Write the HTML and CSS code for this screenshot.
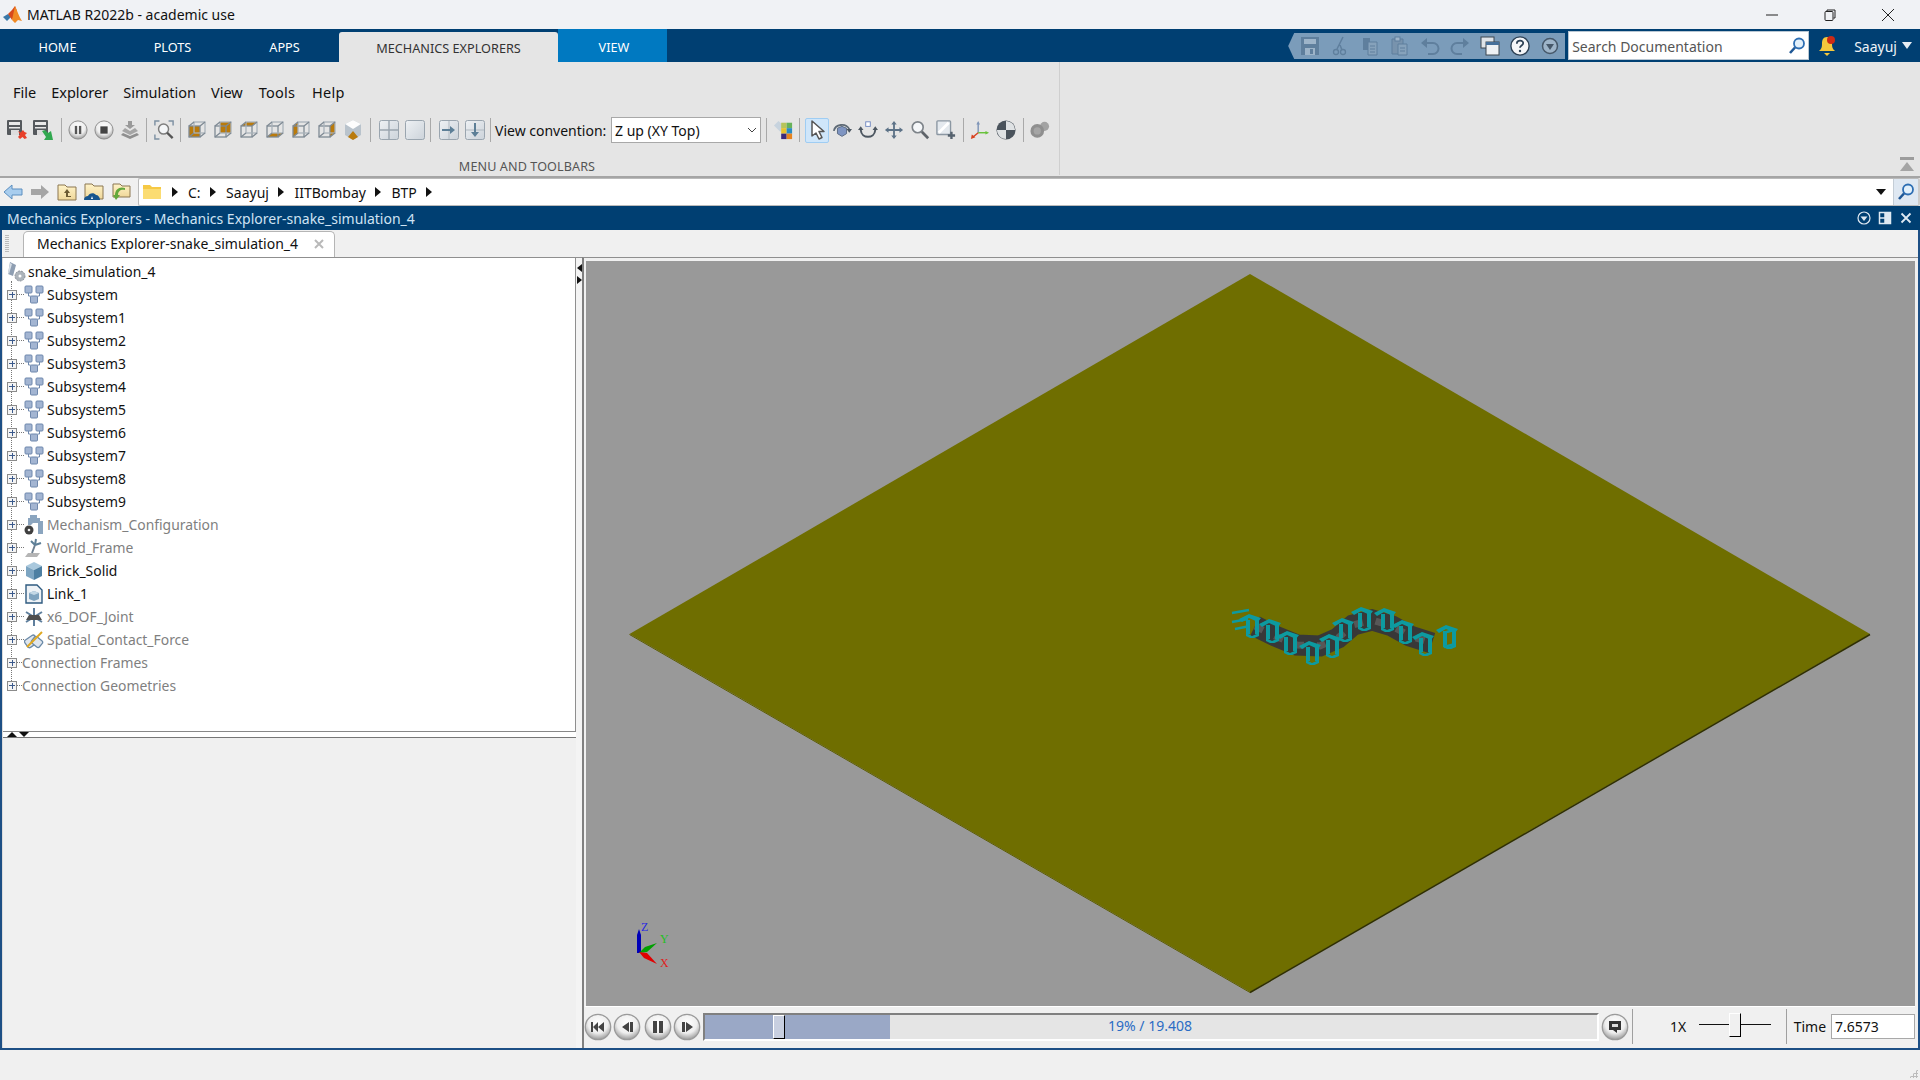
FILE: index.html
```html
<!DOCTYPE html>
<html lang="en">
<head>
<meta charset="utf-8">
<title>MATLAB R2022b - academic use</title>
<link rel="stylesheet" href="styles.css">
</head>
<body>
<svg class="defs" aria-hidden="true">
  <defs>
    <radialGradient id="btn" cx="50%" cy="35%" r="65%"><stop offset="0" stop-color="#fff"/><stop offset=".6" stop-color="#eee"/><stop offset="1" stop-color="#9a9a9a"/></radialGradient>
    <linearGradient id="tile" x1="0" y1="0" x2="1" y2="1"><stop offset="0" stop-color="#eef1f4"/><stop offset="1" stop-color="#ccd3da"/></linearGradient>
    <linearGradient id="fold" x1="0" y1="0" x2="0" y2="1"><stop offset="0" stop-color="#fff3c8"/><stop offset="1" stop-color="#efd79a"/></linearGradient>
    <symbol id="saver" viewBox="0 0 20 20"><rect x="0" y="0" width="15" height="15" rx="1" fill="#55595d"/><rect x="2" y="2" width="11" height="3" fill="#e8e8e8"/><rect x="2" y="7" width="11" height="1.500" fill="#e8e8e8"/><rect x="4" y="10" width="8" height="5" fill="#ddd"/><path d="M11 11l2.500 1.500L16 10l1.500 2 2.500 1-2 2 2 3-2.500 1-2-2-2.500 2-2-2 2-2.500z" fill="#e8402a"/></symbol>
    <symbol id="saveg" viewBox="0 0 20 20"><rect x="0" y="0" width="15" height="15" rx="1" fill="#55595d"/><rect x="2" y="2" width="11" height="3" fill="#e8e8e8"/><rect x="2" y="7" width="11" height="1.500" fill="#e8e8e8"/><rect x="4" y="10" width="8" height="5" fill="#ddd"/><path d="M9 11l3-1 3 3 3-2 2 9h-9l2-3z" fill="#31a84f"/></symbol>
    <symbol id="pause" viewBox="0 0 22 22"><circle cx="11" cy="11" r="10" fill="url(#btn)" stroke="#888"/><rect x="7.500" y="6.500" width="2.600" height="9" fill="#555"/><rect x="12" y="6.500" width="2.600" height="9" fill="#555"/></symbol>
    <symbol id="stop" viewBox="0 0 22 22"><circle cx="11" cy="11" r="10" fill="url(#btn)" stroke="#888"/><rect x="7" y="7" width="8" height="8" fill="#444"/></symbol>
    <symbol id="stack" viewBox="0 0 20 20"><path d="M8 1h4v4h3l-5 4-5-4h3z" fill="#9a9a9a"/><path d="M5 8l5 3 5-3 3 3-8 4-8-4z" fill="#a5a5a5"/><path d="M3 13l7 3 7-3 2 2-9 4-9-4z" fill="#8f8f8f"/></symbol>
    <symbol id="fit" viewBox="0 0 22 22"><path d="M1 6V1h5M16 1h5v5M1 16v5h5" fill="none" stroke="#7e91a3" stroke-width="1.600"/><circle cx="10.500" cy="10" r="5.500" fill="#f4f6f8" stroke="#7d7d7d" stroke-width="1.600"/><path d="M14.500 14l6 6" stroke="#555" stroke-width="2.600"/></symbol>
    <symbol id="cube" viewBox="0 0 20 20"><g fill="none" stroke="#7f8a94" stroke-width="1.300"><rect x="2" y="6" width="11" height="11"/><rect x="7" y="2" width="11" height="11" stroke="#a9b2ba"/><path d="M2 6l5-4M13 6l5-4M13 17l5-4M2 17l5-4"/></g></symbol>
    <symbol id="cf" viewBox="0 0 20 20"><rect x="2" y="6" width="11" height="11" fill="#b97a0c"/><use href="#cube"/></symbol>
    <symbol id="cb" viewBox="0 0 20 20"><rect x="7" y="2" width="11" height="11" fill="#b97a0c"/><use href="#cube"/></symbol>
    <symbol id="ct" viewBox="0 0 20 20"><path d="M2 6l5-4h11l-5 4z" fill="#b97a0c"/><use href="#cube"/></symbol>
    <symbol id="cd" viewBox="0 0 20 20"><path d="M2 17l5-4h11l-5 4z" fill="#b97a0c"/><use href="#cube"/></symbol>
    <symbol id="cl" viewBox="0 0 20 20"><path d="M2 6l5-4v11l-5 4z" fill="#b97a0c"/><use href="#cube"/></symbol>
    <symbol id="cr" viewBox="0 0 20 20"><path d="M13 6l5-4v11l-5 4z" fill="#b97a0c"/><use href="#cube"/></symbol>
    <symbol id="ciso" viewBox="0 0 20 20"><path d="M10 0l8 4v11l-8 5-8-5V4z" fill="#b9c3cc"/><path d="M10 0l8 4-8 5-8-5z" fill="#fdfdfd"/><path d="M10 11l5 6-5 3-5-3z" fill="#b97a0c"/></symbol>
    <symbol id="grid4" viewBox="0 0 20 20"><rect x=".5" y=".5" width="19" height="19" rx="2" fill="url(#tile)" stroke="#9aa5af"/><path d="M10 1v18M1 10h18" stroke="#9aa5af" stroke-width="1.400"/></symbol>
    <symbol id="grid1" viewBox="0 0 20 20"><rect x=".5" y=".5" width="19" height="19" rx="2" fill="url(#tile)" stroke="#9aa5af"/></symbol>
    <symbol id="aright" viewBox="0 0 20 20"><rect x=".5" y=".5" width="19" height="19" rx="2" fill="url(#tile)" stroke="#9aa5af"/><path d="M10 1v18" stroke="#b0b9c1"/><path d="M3 9h8V6l5 4-5 4v-3H3z" fill="#5d7f97"/></symbol>
    <symbol id="adown" viewBox="0 0 20 20"><rect x=".5" y=".5" width="19" height="19" rx="2" fill="url(#tile)" stroke="#9aa5af"/><path d="M1 10h18" stroke="#b0b9c1"/><path d="M9 3h2v9h3l-4 5-4-5h3z" fill="#5d7f97"/></symbol>
    <symbol id="palette" viewBox="0 0 22 22"><path d="M1 6l5-5 8 7-6 5z" fill="#c7d3de"/><rect x="9" y="3" width="6" height="6" fill="#b7c45a"/><rect x="15" y="3" width="6" height="6" fill="#68b25a"/><rect x="9" y="9" width="6" height="6" fill="#e8c22d"/><rect x="15" y="9" width="6" height="6" fill="#2a8cc4"/><rect x="9" y="15" width="6" height="6" fill="#3c2a7d"/><rect x="15" y="15" width="6" height="6" fill="#e8841f"/></symbol>
    <symbol id="cursor" viewBox="0 0 20 20"><path d="M5 1v15l4-3 3 6 3-1.500-3-6h5z" fill="#fff" stroke="#555" stroke-width="1.500" stroke-linejoin="round"/></symbol>
    <symbol id="orbit" viewBox="0 0 22 22"><path d="M2 12a9 8 0 0 1 17-2" fill="none" stroke="#5e6a75" stroke-width="2"/><path d="M16 10h6l-3 4z" fill="#4a5560"/><path d="M11 7l5 2v6l-5 3-5-3V9z" fill="#7f95c2" stroke="#56677f"/></symbol>
    <symbol id="roll" viewBox="0 0 22 22"><path d="M3 11c1 10 15 10 16 0" fill="none" stroke="#4c5660" stroke-width="2.200"/><path d="M0 11h6l-3-4zM16 11h6l-3-4z" fill="#4c5660"/><rect x="8.500" y="2" width="5" height="5" fill="#fff" stroke="#6d86c0"/></symbol>
    <symbol id="pan" viewBox="0 0 22 22"><path d="M11 1l3 4h-2v5h5V8l4 3-4 3v-2h-5v5h2l-3 4-3-4h2v-5H5v2l-4-3 4-3v2h5V5H8z" fill="#5c7287"/></symbol>
    <symbol id="mag" viewBox="0 0 22 22"><circle cx="8.500" cy="8" r="6" fill="#f5f7f9" stroke="#7d8389" stroke-width="1.800"/><path d="M13 13l7 7" stroke="#5e6369" stroke-width="3"/></symbol>
    <symbol id="zbox" viewBox="0 0 22 22"><rect x="1" y="1" width="15" height="15" rx="1" fill="#e4e9ee" stroke="#8b97a2" stroke-width="1.500"/><path d="M3 14L14 3" stroke="#fff" stroke-width="3"/><path d="M13 17h8M17 13v8" stroke="#55626e" stroke-width="2.600"/></symbol>
    <symbol id="axes" viewBox="0 0 22 22"><path d="M9 14V3" stroke="#7f95b8" stroke-width="1.600"/><path d="M9 1l2 4H7z" fill="#7f95b8"/><path d="M9 14h10" stroke="#69c23c" stroke-width="1.600"/><path d="M21 14l-4-2v4z" fill="#69c23c"/><path d="M9 14l-6 5" stroke="#d9421f" stroke-width="1.600"/><path d="M1 21l1-5 4 3z" fill="#d9421f"/></symbol>
    <symbol id="shade" viewBox="0 0 22 22"><circle cx="11" cy="11" r="10.500" fill="#4a535c"/><path d="M11 1a10 10 0 0 1 10 10H11zM11 11v10A10 10 0 0 1 1 11z" fill="#dfe2e4"/></symbol>
    <symbol id="blob" viewBox="0 0 22 22"><circle cx="16" cy="7" r="5" fill="#a3a3a3"/><circle cx="8" cy="12" r="7.500" fill="#8f8f8f"/><circle cx="8" cy="12" r="4" fill="#a5a5a5"/></symbol>
    <symbol id="back" viewBox="0 0 20 16"><path d="M9 1L1 8l8 7v-4h10V5H9z" fill="#a8cdee" stroke="#5c8fc0"/></symbol>
    <symbol id="fwd" viewBox="0 0 20 16"><path d="M11 1l8 7-8 7v-4H1V5h10z" fill="#a6a6a6"/></symbol>
    <symbol id="fup" viewBox="0 0 20 18"><path d="M1 2h7l2 2h9v13H1z" fill="url(#fold)" stroke="#8b7650"/><path d="M10 6l3 4h-2v3h3v1H9v-4H7z" fill="#6b5a32"/></symbol>
    <symbol id="fcloud" viewBox="0 0 20 18"><path d="M1 1h7l2 2h9v13H1z" fill="url(#fold)" stroke="#8b7650"/><path d="M0 17c0-3 2-4 4-4 1-3 6-4 8-1 2 0 4 2 4 5z" fill="#17558d"/><path d="M7 16l1-3 1 3z" fill="#fff"/></symbol>
    <symbol id="fgreen" viewBox="0 0 20 18"><path d="M2 1h7l2 2h8v11H2z" fill="url(#fold)" stroke="#8b7650"/><path d="M14 7c-4-1-7 1-7 5h2l-4 5-3-5h2c0-6 5-9 10-7z" fill="#62a83c"/></symbol>
    <symbol id="pfolder" viewBox="0 0 20 16"><path d="M1 1h7l2 2h9v12H1z" fill="#f6c945"/><path d="M1 5h18v10H1z" fill="#fbdc72"/></symbol>
    <symbol id="qsave" viewBox="0 0 20 20"><path d="M1 1h18v18H1z" fill="#5f7f9d"/><rect x="4" y="3" width="12" height="5" fill="#9db4c9"/><rect x="5" y="12" width="10" height="7" fill="#9db4c9"/><rect x="10" y="13" width="3" height="5" fill="#5f7f9d"/></symbol>
    <symbol id="qcut" viewBox="0 0 20 20"><path d="M13 1L7 13M10 9l2 5" stroke="#5f7f9d" stroke-width="1.500" fill="none"/><circle cx="6" cy="16" r="2.500" fill="none" stroke="#5f7f9d" stroke-width="1.300"/><circle cx="13" cy="16" r="2.500" fill="none" stroke="#5f7f9d" stroke-width="1.300"/></symbol>
    <symbol id="qcopy" viewBox="0 0 20 20"><path d="M3 2h7v12H3z" fill="#5f7f9d"/><path d="M8 6h9v13H8z" fill="#86a2bb" stroke="#5f7f9d"/><path d="M10 10h5M10 13h5M10 16h5" stroke="#5f7f9d"/></symbol>
    <symbol id="qpaste" viewBox="0 0 20 20"><path d="M2 3h11v15H2z" fill="#7893ad" stroke="#5f7f9d"/><rect x="5" y="1" width="5" height="4" fill="#9db4c9" stroke="#5f7f9d"/><path d="M8 8h9v11H8z" fill="#86a2bb" stroke="#5f7f9d"/><path d="M10 12h5M10 15h5" stroke="#5f7f9d"/></symbol>
    <symbol id="qundo" viewBox="0 0 20 20"><path d="M5 7h8a5 5 0 0 1 0 11H8" fill="none" stroke="#5f7f9d" stroke-width="2"/><path d="M1 7l6-5v10z" fill="#5f7f9d"/></symbol>
    <symbol id="qredo" viewBox="0 0 20 20"><path d="M15 7H7a5 5 0 0 0 0 11h5" fill="none" stroke="#5f7f9d" stroke-width="2"/><path d="M19 7l-6-5v10z" fill="#5f7f9d"/></symbol>
    <symbol id="qwin" viewBox="0 0 20 20"><rect x="1" y="1" width="13" height="11" fill="#dfe4e8" stroke="#3c4650"/><rect x="6" y="6" width="13" height="13" fill="#eef1f4" stroke="#3c4650"/><rect x="6" y="6" width="13" height="3" fill="#46709a"/></symbol>
    <symbol id="qhelp" viewBox="0 0 22 22"><circle cx="11" cy="11" r="10" fill="#f5f6f8" stroke="#2e4256" stroke-width="1.500"/><path d="M7.500 8.500c0-5 7.500-4 7-.5 0 2.500-3.500 2.500-3.500 5" fill="none" stroke="#2e4256" stroke-width="2"/><circle cx="11" cy="16.500" r="1.300" fill="#2e4256"/></symbol>
    <symbol id="qdown" viewBox="0 0 20 20"><circle cx="10" cy="10" r="7.500" fill="#9db4c9" stroke="#46586a" stroke-width="1.500"/><path d="M6 8h8l-4 6z" fill="#46586a"/></symbol>
    <symbol id="search" viewBox="0 0 18 18"><circle cx="11" cy="6.500" r="5" fill="#e2f0fb" stroke="#2d6eb3" stroke-width="1.800"/><path d="M7 10.500L2 16" stroke="#1e5796" stroke-width="2.600"/></symbol>
    <symbol id="bell" viewBox="0 0 20 24"><path d="M10 3c4 0 5 3 5 7 0 4 1 5 3 7H2c2-2 3-3 3-7 0-4 1-7 5-7z" fill="#f4c83c"/><path d="M7 19h6l-3 3z" fill="#f4c83c"/><circle cx="14" cy="6" r="4" fill="#cc2a16"/></symbol>
    <symbol id="sub" viewBox="0 0 20 20"><rect x="1" y="1" width="7" height="7" rx="1" fill="#a3b5d2" stroke="#6f88ad"/><rect x="12" y="1" width="7" height="7" rx="1" fill="#a3b5d2" stroke="#6f88ad"/><rect x="6.500" y="11" width="7" height="7" rx="1" fill="#a3b5d2" stroke="#6f88ad"/><path d="M4.500 8v3h2M15.500 8v3h-2" fill="none" stroke="#6f88ad"/></symbol>
    <symbol id="rootm" viewBox="0 0 20 20"><path d="M4 0l6 3-3 11-5-2z" fill="#8e9eb2"/><path d="M4 1l2 1-3 10-1-1z" fill="#d7dee6"/><circle cx="14" cy="14" r="5" fill="#adb4bb" stroke="#8a9099" stroke-dasharray="2 1"/><circle cx="14" cy="14" r="1.500" fill="#fff"/></symbol>
    <symbol id="mech" viewBox="0 0 20 20"><path d="M4 3h12v3h3v13h-5V8H9l-2 2H4z" fill="#8ba5bf"/><path d="M6 0h7v5H6z" fill="#8ba5bf"/><circle cx="5" cy="15" r="4.500" fill="#3f3f3f"/><circle cx="5" cy="15" r="1.300" fill="#eee"/></symbol>
    <symbol id="world" viewBox="0 0 20 20"><path d="M1 19l3-4h12l-3 4z" fill="#b5b5b5"/><path d="M8 15l3-8" stroke="#6d7f90" stroke-width="2"/><path d="M11 7L7 3M11 7l6-2M12 1l-1 6" stroke="#5d7f97" stroke-width="2" fill="none"/></symbol>
    <symbol id="brick" viewBox="0 0 20 20"><path d="M10 1l8 4-8 4-8-4z" fill="#a9c8dd"/><path d="M2 5l8 4v10l-8-4z" fill="#7da5c2"/><path d="M18 5l-8 4v10l8-4z" fill="#4d7fa2"/></symbol>
    <symbol id="file3d" viewBox="0 0 20 20"><path d="M2 1h11l5 5v13H2z" fill="#eef2f6" stroke="#2f5b80" stroke-width="1.400"/><path d="M10 7l5 2v6l-5 2-5-2V9z" fill="#7fa3bf"/><path d="M10 7l5 2-5 2-5-2z" fill="#c4d8e6"/></symbol>
    <symbol id="joint" viewBox="0 0 20 20"><path d="M10 1v18M2 5l16 10M18 5L2 15" stroke="#5f7f9d" stroke-width="2"/><path d="M5 8h10l3 5H2z" fill="#4f4f4f"/></symbol>
    <symbol id="contact" viewBox="0 0 20 20"><rect x="1" y="7" width="12" height="9" rx="2" fill="#dfe6ee" stroke="#6b8aa8" stroke-width="1.300" transform="rotate(-35 7 11)"/><rect x="8" y="8" width="10" height="8" rx="2" fill="#dfe6ee" stroke="#6b8aa8" stroke-width="1.300" transform="rotate(40 13 12)"/><path d="M3 17L18 2" stroke="#dfa820" stroke-width="2"/></symbol>
    <symbol id="rbtn" viewBox="0 0 28 28"><circle cx="14" cy="14" r="12.700" fill="url(#btn)" stroke="#9b9b9b" stroke-width="1.300"/></symbol>
    <symbol id="br" viewBox="-12 -14 24 28"><path fill="#0d9aa0" d="M-11-5L-1-10 11-6 8-2-1-6-8-2zM-4-4H0V10h-4zM-4 9l6 3 7-3v3l-7 3-6-3zM5-5h4V10H5z"/></symbol>
  </defs>
</svg>

<div class="app">
  <header class="titlebar">
    <svg class="logo" viewBox="0 0 20 20"><path d="M0 12l5-3 3 3-4 4z" fill="#3b79a8"/><path d="M5 9l4-4 3-4 2 5-5 9z" fill="#d84a1c"/><path d="M12 1c2 4 4 11 7 15l-4-1-3 3-3-3z" fill="#f08a24"/></svg>
    <span class="apptitle">MATLAB R2022b - academic use</span>
    <div class="winctl">
      <svg class="wc" viewBox="0 0 12 12"><path d="M0 6h12" stroke="#222" stroke-width="1"/></svg>
      <svg class="wc" viewBox="0 0 12 12"><path d="M3 2.500V1h8v8H9.500" fill="none" stroke="#222"/><rect x="1" y="2.500" width="8" height="9" fill="none" stroke="#222" rx="1"/></svg>
      <svg class="wc" viewBox="0 0 12 12"><path d="M0 0l12 12M12 0L0 12" stroke="#222"/></svg>
    </div>
  </header>

  <nav class="tabbar">
    <span class="rt rt-home">HOME</span>
    <span class="rt rt-plots">PLOTS</span>
    <span class="rt rt-apps">APPS</span>
    <span class="rt rt-active">MECHANICS EXPLORERS</span>
    <span class="rt rt-view">VIEW</span>
    <div class="quick">
      <svg class="q"><use href="#qsave"/></svg>
      <svg class="q"><use href="#qcut"/></svg>
      <svg class="q"><use href="#qcopy"/></svg>
      <svg class="q"><use href="#qpaste"/></svg>
      <svg class="q"><use href="#qundo"/></svg>
      <svg class="q"><use href="#qredo"/></svg>
      <svg class="q"><use href="#qwin"/></svg>
      <svg class="q"><use href="#qhelp"/></svg>
      <svg class="q"><use href="#qdown"/></svg>
    </div>
    <div class="docsearch"><span>Search Documentation</span><svg class="s18"><use href="#search"/></svg></div>
    <svg class="bell"><use href="#bell"/></svg>
    <span class="user">Saayuj</span><span class="user-arrow"></span>
  </nav>

  <section class="toolstrip">
    <div class="ts-main">
      <div class="menus"><span>File</span><span>Explorer</span><span>Simulation</span><span>View</span><span class="m-tools">Tools</span><span class="m-help">Help</span></div>
      <div class="tools">
        <svg class="ti"><use href="#saver"/></svg><svg class="ti"><use href="#saveg"/></svg>
        <i class="sep s53"></i>
        <svg class="ti"><use href="#pause"/></svg><svg class="ti"><use href="#stop"/></svg><svg class="ti"><use href="#stack"/></svg>
        <i class="sep s34"></i>
        <svg class="ti"><use href="#fit"/></svg>
        <i class="sep s33"></i>
        <svg class="ti"><use href="#cf"/></svg><svg class="ti"><use href="#cb"/></svg><svg class="ti"><use href="#ct"/></svg><svg class="ti"><use href="#cd"/></svg><svg class="ti"><use href="#cl"/></svg><svg class="ti"><use href="#cr"/></svg><svg class="ti"><use href="#ciso"/></svg>
        <i class="sep s45"></i>
        <svg class="ti"><use href="#grid4"/></svg><svg class="ti"><use href="#grid1"/></svg>
        <i class="sep s25"></i>
        <svg class="ti"><use href="#aright"/></svg><svg class="ti"><use href="#adown"/></svg>
        <i class="sep s24"></i>
        <span class="vc-label">View convention:</span>
        <div class="select"><span>Z up (XY Top)</span><svg class="chev" viewBox="0 0 10 6"><path d="M1 1l4 4 4-4" fill="none" stroke="#444"/></svg></div>
        <i class="sep s53"></i>
        <svg class="ti"><use href="#palette"/></svg>
        <i class="sep s35"></i>
        <div class="ti-on"><svg class="s20"><use href="#cursor"/></svg></div>
        <svg class="ti"><use href="#orbit"/></svg><svg class="ti"><use href="#roll"/></svg><svg class="ti"><use href="#pan"/></svg><svg class="ti"><use href="#mag"/></svg><svg class="ti"><use href="#zbox"/></svg>
        <i class="sep s43"></i>
        <svg class="ti"><use href="#axes"/></svg><svg class="ti"><use href="#shade"/></svg>
        <i class="sep s43"></i>
        <svg class="ti"><use href="#blob"/></svg>
      </div>
      <div class="ts-label">MENU AND TOOLBARS</div>
    </div>
    <div class="ts-rest"><div class="collapse"><i></i><b></b></div></div>
  </section>

  <section class="addr">
    <div class="nav">
      <svg class="n"><use href="#back"/></svg><svg class="n"><use href="#fwd"/></svg><svg class="n"><use href="#fup"/></svg><svg class="n"><use href="#fcloud"/></svg><svg class="n"><use href="#fgreen"/></svg>
    </div>
    <div class="path">
      <svg class="pf"><use href="#pfolder"/></svg>
      <i class="tri"></i><span>C:</span><i class="tri"></i><span>Saayuj</span><i class="tri"></i><span>IITBombay</span><i class="tri"></i><span>BTP</span><i class="tri"></i>
      <i class="tri-down"></i>
      <div class="addr-go"><svg class="s18"><use href="#search"/></svg></div>
    </div>
  </section>

  <section class="frame">
    <div class="ptitle">
      <span>Mechanics Explorers - Mechanics Explorer-snake_simulation_4</span>
      <svg class="pc" viewBox="0 0 14 14"><circle cx="7" cy="7" r="6" fill="none" stroke="#dfe9f2" stroke-width="1.200"/><path d="M3.500 5.500h7L7 10z" fill="#dfe9f2"/></svg>
      <svg class="pc" viewBox="0 0 14 14"><rect x="1.500" y="1.500" width="11" height="11" fill="none" stroke="#dfe9f2" stroke-width="1.500"/><path d="M7 1v12M1 7h6" stroke="#dfe9f2" stroke-width="1.500"/><rect x="7" y="2" width="5" height="10" fill="#dfe9f2"/></svg>
      <svg class="pc" viewBox="0 0 14 14"><path d="M2.500 2.500l9 9M11.500 2.500l-9 9" stroke="#dfe9f2" stroke-width="1.800"/></svg>
    </div>
    <div class="tabstrip">
      <div class="grip"></div>
      <div class="doc-tab"><span>Mechanics Explorer-snake_simulation_4</span><svg class="tabx" viewBox="0 0 12 12"><path d="M2 2l8 8M10 2l-8 8" stroke="#b9b9b9" stroke-width="2"/></svg></div>
    </div>
    <div class="main">
      <aside class="left">
        <ul class="tree">
          <li class="root"><svg class="ic"><use href="#rootm"/></svg><span>snake_simulation_4</span></li>
          <li><i class="ex"></i><i class="dots"></i><svg class="ic"><use href="#sub"/></svg><span>Subsystem</span></li>
          <li><i class="ex"></i><i class="dots"></i><svg class="ic"><use href="#sub"/></svg><span>Subsystem1</span></li>
          <li><i class="ex"></i><i class="dots"></i><svg class="ic"><use href="#sub"/></svg><span>Subsystem2</span></li>
          <li><i class="ex"></i><i class="dots"></i><svg class="ic"><use href="#sub"/></svg><span>Subsystem3</span></li>
          <li><i class="ex"></i><i class="dots"></i><svg class="ic"><use href="#sub"/></svg><span>Subsystem4</span></li>
          <li><i class="ex"></i><i class="dots"></i><svg class="ic"><use href="#sub"/></svg><span>Subsystem5</span></li>
          <li><i class="ex"></i><i class="dots"></i><svg class="ic"><use href="#sub"/></svg><span>Subsystem6</span></li>
          <li><i class="ex"></i><i class="dots"></i><svg class="ic"><use href="#sub"/></svg><span>Subsystem7</span></li>
          <li><i class="ex"></i><i class="dots"></i><svg class="ic"><use href="#sub"/></svg><span>Subsystem8</span></li>
          <li><i class="ex"></i><i class="dots"></i><svg class="ic"><use href="#sub"/></svg><span>Subsystem9</span></li>
          <li class="dim"><i class="ex"></i><i class="dots"></i><svg class="ic"><use href="#mech"/></svg><span>Mechanism_Configuration</span></li>
          <li class="dim"><i class="ex"></i><i class="dots"></i><svg class="ic"><use href="#world"/></svg><span>World_Frame</span></li>
          <li><i class="ex"></i><i class="dots"></i><svg class="ic"><use href="#brick"/></svg><span>Brick_Solid</span></li>
          <li><i class="ex"></i><i class="dots"></i><svg class="ic"><use href="#file3d"/></svg><span>Link_1</span></li>
          <li class="dim"><i class="ex"></i><i class="dots"></i><svg class="ic"><use href="#joint"/></svg><span>x6_DOF_Joint</span></li>
          <li class="dim"><i class="ex"></i><i class="dots"></i><svg class="ic"><use href="#contact"/></svg><span>Spatial_Contact_Force</span></li>
          <li class="dim plain"><i class="ex"></i><i class="dots short"></i><span>Connection Frames</span></li>
          <li class="dim plain last"><i class="ex"></i><i class="dots short"></i><span>Connection Geometries</span></li>
        </ul>
        <div class="hsplit"><i class="up"></i><i class="down"></i></div>
        <div class="lower"></div>
      </aside>
      <div class="vsplit"><i class="tl"></i><i class="tr"></i></div>
      <div class="viewer">
        <div class="canvas">
          <svg class="scene" viewBox="0 0 1327 745">
            <polygon points="664,13 1284,373 664,731 43.500,373" fill="#6f6e00"/>
            <path d="M1284 373.500L664 731.500" stroke="#2f2f00" stroke-width="1.500"/>
            <path d="M43.500 373.500L664 731.500" stroke="#5c5c00" stroke-width="1"/>
            <g fill="none" stroke="#0d9aa0" stroke-width="2.400"><path d="M646 352l17-3M646 361l16-3M649 368l15-3"/><path d="M857 372l11-3M858 386l11-3"/></g>
            <polyline points="669,365 689,375 711,384 734,385 752,377 767,364 786,359 806,365 824,375 846,382" fill="none" stroke="#383838" stroke-width="21"/>
            <polyline points="669,365 689,375 711,384 734,385 752,377 767,364 786,359 806,365 824,375 846,382" fill="none" stroke="#575757" stroke-width="7" stroke-dasharray="9 13"/>
            <use href="#br" x="652" y="349" width="24" height="28"/>
            <use href="#br" x="672" y="354" width="24" height="28"/>
            <use href="#br" x="690" y="366" width="24" height="28"/>
            <use href="#br" x="712" y="376" width="24" height="28"/>
            <use href="#br" x="732" y="369" width="24" height="28"/>
            <use href="#br" x="745" y="353" width="24" height="28"/>
            <use href="#br" x="764" y="342" width="24" height="28"/>
            <use href="#br" x="787" y="343" width="24" height="28"/>
            <use href="#br" x="805" y="355" width="24" height="28"/>
            <use href="#br" x="825" y="367" width="24" height="28"/>
            <use href="#br" x="849" y="360" width="24" height="28"/>
            <path d="M51 692v-18l2-6 2 6v18z" fill="#0000b8"/>
            <path d="M53 692l6-6 12-4-10 9z" fill="#00a000"/>
            <path d="M53 691l8 1 10 11-13-6z" fill="#e00000"/>
            <text x="55" y="670" class="ax az">Z</text>
            <text x="74" y="682" class="ax ay">Y</text>
            <text x="74" y="706" class="ax ax-x">X</text>
          </svg>
        </div>
        <div class="controls">
          <button class="pb"><svg class="pbi" viewBox="0 0 28 28"><use href="#rbtn"/><path d="M7 9h2v10H7zM14 9v10l-5-5zM20 9v10l-6-5z" fill="#444"/></svg></button>
          <button class="pb g3"><svg class="pbi" viewBox="0 0 28 28"><use href="#rbtn"/><path d="M9 14l7-5v10zM17 9h3v10h-3z" fill="#444"/></svg></button>
          <button class="pb g5"><svg class="pbi" viewBox="0 0 28 28"><use href="#rbtn"/><path d="M9 8h4v12H9zM15 8h4v12h-4z" fill="#444"/></svg></button>
          <button class="pb g3"><svg class="pbi" viewBox="0 0 28 28"><use href="#rbtn"/><path d="M9 9h3v10H9zM13 9l7 5-7 5z" fill="#444"/></svg></button>
          <div class="progress">
            <div class="fill"><i class="handle"></i></div>
            <span class="ptext">19% / 19.408</span>
          </div>
          <button class="pb g3"><svg class="pbi" viewBox="0 0 28 28"><use href="#rbtn"/><path d="M8 8h12v9h-4v3l-4-3H8z" fill="#333"/><rect x="11" y="11" width="6" height="3" fill="#ddd"/></svg></button>
          <i class="csep sa"></i>
          <span class="speed">1X</span>
          <div class="sslider"><i class="sh"></i></div>
          <i class="csep"></i>
          <label class="timel">Time</label>
          <div class="timev">7.6573</div>
        </div>
      </div>
    </div>
  </section>

  <footer class="status"><div class="rgrip"></div></footer>
</div>
</body>
</html>
```
FILE: styles.css
```css
* { box-sizing: border-box; }
html, body { margin: 0; padding: 0; width: 1920px; height: 1080px; overflow: hidden; }
body { font-family: "Noto Sans", "Open Sans", sans-serif; font-size: 14px; color: #111; background: #f0f0f0; }
.defs { position: absolute; width: 0; height: 0; }
.app { display: flex; flex-direction: column; width: 1920px; height: 1080px; }
i { display: block; font-style: normal; }
svg { display: block; flex: none; }

/* title bar */
.titlebar { height: 29px; flex: none; background: #f0f2f5; display: flex; align-items: center; padding-left: 3px; }
.logo { width: 20px; height: 20px; }
.apptitle { margin-left: 4px; font-size: 14px; color: #111; }
.winctl { margin-left: auto; display: flex; align-items: center; padding-right: 26px; gap: 46px; }
.wc { width: 12px; height: 12px; }

/* ribbon tabs */
.tabbar { height: 33px; flex: none; background: #003f72; display: flex; align-items: stretch; position: relative; color: #fff; font-size: 12.700px; padding-right: 8px; }
.rt { display: flex; align-items: center; justify-content: center; padding-top: 3px; }
.rt-home { width: 115px; }
.rt-plots { width: 115px; }
.rt-apps { width: 109px; }
.rt-active { width: 219px; margin-top: 3px; background: #e5e5e5; color: #333; border-radius: 3px 3px 0 0; padding-top: 1px; }
.rt-view { width: 109px; background: #0079c1; padding-left: 3px; }
.quick { margin-left: auto; width: 277px; margin-top: 4px; margin-bottom: 3px; background: #7b9cba; display: flex; align-items: center; gap: 10px; padding-left: 12px; clip-path: polygon(6px 0, 100% 0, 100% 100%, 6px 100%, 0 50%); }
.q { width: 20px; height: 20px; }
.docsearch { width: 241px; margin: 2px 0 2px 3px; background: #fff; border: 1px solid #b9c7d3; display: flex; align-items: center; padding: 1px 2px 0 3px; color: #555; font-size: 14px; }
.docsearch span { flex: 1; }
.s18 { width: 18px; height: 18px; }
.bell { width: 20px; height: 24px; margin: 5px 0 0 8px; }
.user { margin-left: 17px; align-self: center; padding-top: 1px; font-size: 14px; color: #eef3f8; }
.user-arrow { align-self: center; margin-left: 5px; border-top: 7px solid #e6edf3; border-left: 5.500px solid transparent; border-right: 5.500px solid transparent; }

/* toolstrip */
.toolstrip { height: 116px; flex: none; background: #e5e5e5; display: flex; border-bottom: 2px solid #a5a5a5; }
.ts-main { width: 1060px; border-right: 1px solid #cfcfcf; display: flex; flex-direction: column; margin-bottom: 1px; }
.menus { display: flex; flex: none; height: 30px; margin-top: 15px; align-items: center; padding-left: 13px; gap: 15px; font-size: 14.500px; color: #111; }
.m-tools { margin-left: 1px; letter-spacing: .2px; }
.m-help { margin-left: 2px; letter-spacing: .3px; }
.tools { display: flex; flex: none; align-items: center; height: 28px; margin-top: 9px; padding-left: 4px; }
.ti { width: 26px; height: 20px; }
.ti-on { width: 24px; height: 25px; background: #cfe6fa; border: 1px solid #9fcdf3; border-radius: 2px; display: flex; align-items: center; justify-content: center; }
.s20 { width: 20px; height: 20px; }
.sep { width: 1px; height: 24px; background: #a9a9a9; }
.s53 { margin: 0 3px 0 5px; }
.s34 { margin: 0 4px 0 3px; }
.s33 { margin: 0 3px; }
.s45 { margin: 0 5px 0 4px; }
.s25 { margin: 0 5px 0 2px; }
.s24 { margin: 0 4px 0 2px; }
.s35 { margin: 0 5px 0 3px; }
.s43 { margin: 0 3px 0 4px; }
.vc-label { width: 116px; font-size: 14px; white-space: nowrap; }
.select { width: 150px; height: 26px; background: #fff; border: 1px solid #a8a8a8; display: flex; align-items: center; padding: 0 3px 0 3px; font-size: 14px; }
.select span { flex: 1; }
.chev { width: 10px; height: 6px; }
.ts-label { flex: none; margin-top: 14px; text-align: center; width: 1054px; font-size: 12.600px; line-height: 17px; color: #555; letter-spacing: .1px; }
.ts-rest { flex: 1; position: relative; }
.collapse { position: absolute; right: 6px; bottom: 5px; width: 14px; }
.collapse i { height: 3px; background: #9c9c9c; margin-bottom: 2px; }
.collapse b { display: block; border-bottom: 9px solid #a5a5a5; border-left: 7px solid transparent; border-right: 7px solid transparent; }

/* address bar */
.addr { height: 28px; flex: none; display: flex; background: #f0f0f0; }
.nav { width: 138px; display: flex; align-items: center; padding-left: 3px; gap: 7px; }
.n { width: 20px; height: 18px; }
.path { flex: 1; background: #fff; border: 1px solid #bbb; border-right: 2px solid #ccc; border-radius: 2px; display: flex; align-items: center; padding-left: 3px; font-size: 14px; }
.pf { width: 20px; height: 16px; margin-right: 8px; }
.tri { border-left: 6px solid #111; border-top: 5px solid transparent; border-bottom: 5px solid transparent; margin: 0 10px 0 2px; }
.path span { margin-right: 7.500px; }
.tri-down { margin-left: auto; margin-right: 7px; border-top: 6px solid #111; border-left: 5px solid transparent; border-right: 5px solid transparent; }
.addr-go { width: 25px; height: 100%; background: #dfe8f2; border-left: 1px solid #c4cdd6; display: flex; align-items: center; justify-content: center; }

/* docked frame */
.frame { flex: 1; min-height: 0; display: flex; flex-direction: column; border-left: 2px solid #1d4f85; border-right: 2px solid #1d4f85; border-bottom: 2px solid #1d4f85; background: #f0f0f0; }
.ptitle { height: 24px; flex: none; margin: 0 -2px; background: #003f72; color: #cfe3f4; display: flex; align-items: center; padding: 0 7px; font-size: 14px; gap: 7px; }
.ptitle span { flex: 1; }
.pc { width: 14px; height: 14px; }
.tabstrip { height: 28px; flex: none; display: flex; padding-top: 1px; border-bottom: 1px solid #8f8f8f; background: #f0f0f0; }
.grip { width: 4px; height: 18px; margin: 4px 14px 0 3px; background: repeating-linear-gradient(180deg, #bbb 0 1px, transparent 1px 2px); }
.doc-tab { width: 312px; background: #fff; border: 1px solid #b5b5b5; border-bottom: 0; border-radius: 5px 5px 0 0; display: flex; align-items: center; padding: 0 9px 2px 13px; font-size: 14px; }
.doc-tab span { flex: 1; }
.tabx { width: 12px; height: 12px; }
.main { flex: 1; min-height: 0; display: flex; }

/* left pane */
.left { width: 574px; display: flex; flex-direction: column; border-left: 1px solid #dcdcdc; }
.tree { list-style: none; margin: 0; padding: 2px 0 0 4px; height: 473px; flex: none; background: #fff; border-right: 1px solid #8f8f8f; position: relative; }
.tree::before { content: ""; position: absolute; left: 8px; top: 23px; height: 402px; border-left: 1px dotted #777; }
.tree li { height: 23px; display: flex; align-items: center; font-size: 13.900px; color: #111; position: relative; }
.tree li.dim { color: #7f7f7f; }
.tree .root span { margin-left: -1px; }
.ex { width: 10px; height: 10px; border: 1px solid #8b8b8b; background: linear-gradient(#3b5a8c,#3b5a8c) center/6px 1px no-repeat, linear-gradient(#3b5a8c,#3b5a8c) center/1px 6px no-repeat, #f4f4f4; flex: none; }
.dots { width: 7px; border-top: 1px dotted #777; flex: none; }
.dots.short { width: 5px; }
.ic { width: 20px; height: 20px; margin-right: 3px; }
.root .ic { margin-left: -1px; }
.hsplit { height: 7px; flex: none; background: #fff; border-top: 1px solid #888; border-bottom: 1px solid #777; display: flex; gap: 2px; padding-left: 4px; align-items: center; }
.hsplit .up { border-bottom: 5px solid #111; border-left: 5px solid transparent; border-right: 5px solid transparent; }
.hsplit .down { border-top: 5px solid #111; border-left: 5px solid transparent; border-right: 5px solid transparent; }
.lower { flex: 1; background: #f0f0f0; }
.vsplit { width: 6px; background: #f4f4f4; display: flex; flex-direction: column; align-items: center; gap: 4px; padding-top: 6px; }
.vsplit .tl { border-right: 5px solid #111; border-top: 4px solid transparent; border-bottom: 4px solid transparent; }
.vsplit .tr { border-left: 5px solid #111; border-top: 4px solid transparent; border-bottom: 4px solid transparent; }

/* viewer */
.viewer { flex: 1; min-width: 0; display: flex; flex-direction: column; border-left: 2px solid #808080; padding: 3px 3px 2px 2px; border-top: 1px solid #8f8f8f; margin-top: -1px; }
.canvas { height: 745px; flex: none; background: #999; }
.scene { width: 1327px; height: 745px; }
.ax { font-family: "Liberation Serif", serif; font-size: 12px; }
.az { fill: #2a2ae0; }
.ay { fill: #22c022; }
.ax-x { fill: #e02020; }

.controls { flex: 1; display: flex; align-items: center; background: #f0f0f0; border-top: 1px solid #fff; margin-left: -1px; }
.pb { width: 26px; height: 26px; padding: 0; border: 0; background: none; flex: none; }
.pb.g3 { margin-left: 3px; }
.pb.g5 { margin-left: 5px; }
.pbi { width: 28px; height: 28px; margin: -1px; }
.progress { width: 896px; height: 28px; margin-left: 3px; background: #e5e5e5; border-top: 2px solid #808080; border-left: 2px solid #808080; border-right: 2px solid #fff; border-bottom: 2px solid #fff; position: relative; display: flex; flex: none; }
.fill { width: 185px; height: 100%; background: #9aa8c6; position: relative; }
.handle { position: absolute; left: 68px; top: 0; bottom: 0; width: 12px; background: #c8cfe0; border-left: 1px solid #fff; border-top: 1px solid #fff; border-right: 1px solid #000; border-bottom: 1px solid #000; }
.ptext { position: absolute; left: 0; right: 0; top: 1px; text-align: center; font-size: 14px; color: #2b6cc4; padding-right: 2px; }
.csep { width: 1px; height: 35px; background: #a0a0a0; margin-left: 15px; flex: none; }
.csep.sa { margin-left: 4px; }
.speed { margin-left: 37px; font-size: 14px; width: 17px; }
.sslider { width: 72px; height: 24px; margin-left: 12px; margin-bottom: 3px; position: relative; background: linear-gradient(#111,#111) 0 11px/100% 1px no-repeat; flex: none; }
.sh { position: absolute; left: 30px; top: 0; width: 12px; height: 24px; background: #f0f0f0; border-left: 1px solid #fff; border-top: 1px solid #fff; border-right: 1px solid #000; border-bottom: 1px solid #000; }
.timel { margin-left: 7px; font-size: 14px; width: 38px; }
.timev { width: 84px; height: 25px; background: #fff; border: 1px solid #a8a8a8; font-size: 14px; padding-left: 3px; line-height: 23px; flex: none; }

.status { height: 30px; flex: none; background: #f0f0f0; position: relative; }
.rgrip { position: absolute; right: 2px; bottom: 2px; width: 9px; height: 9px; background: radial-gradient(circle at 1.5px 1.5px, #bbb 1px, transparent 1.1px) 0 0/3px 3px; clip-path: polygon(100% 0, 100% 100%, 0 100%); }
```
